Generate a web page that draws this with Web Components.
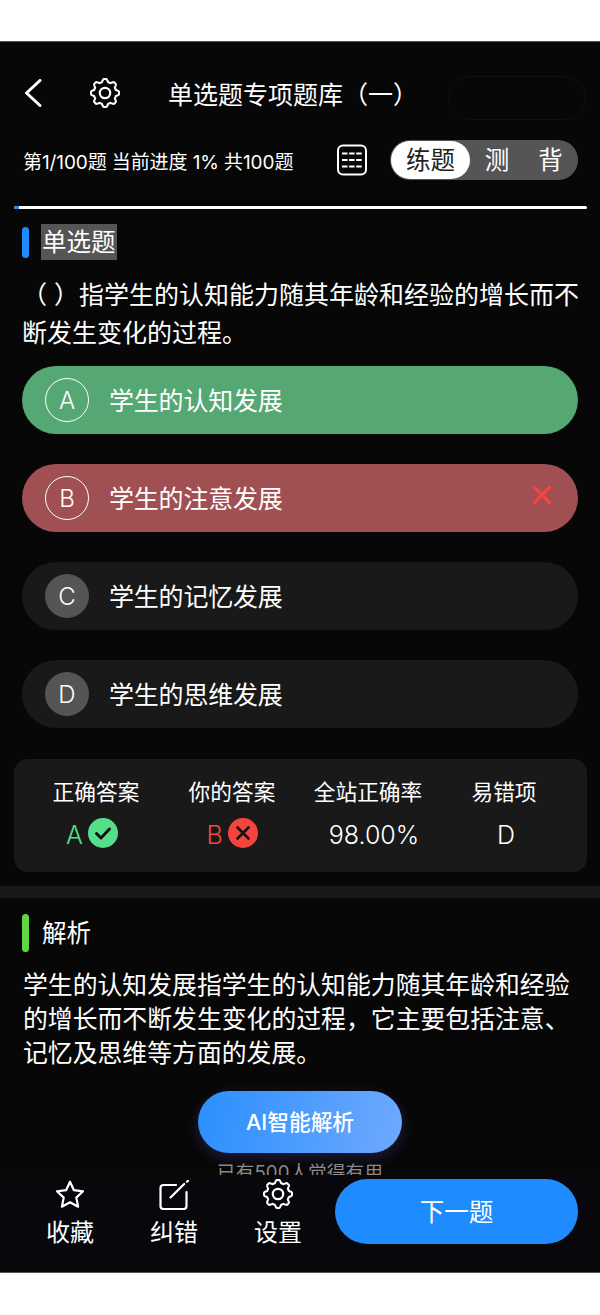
<!DOCTYPE html>
<html lang="zh"><head><meta charset="utf-8"><title>单选题专项题库</title>
<style>
html,body{margin:0;padding:0;background:#fff}
body{width:600px;height:1315px;overflow:hidden;font-family:"Inter","Noto Sans CJK SC",sans-serif;color:#fff}
</style></head><body>
<quiz-app>
  <top-bar slot="main" title-text="单选题专项题库（一）"></top-bar>
  <progress-row slot="main" text="第1/100题 当前进度 1% 共100题"></progress-row>
  <progress-line slot="main"></progress-line>
  <section-title slot="main" color="#1e8bff" mark style="margin-top:15px;height:36px">单选题</section-title>
  <body-text slot="main" style="margin-top:16px;line-height:38px;padding:0 15px 0 22px">（ ）指学生的认知能力随其年龄和经验的增长而不断发生变化的过程。</body-text>
  <div slot="main" style="display:flex;flex-direction:column;gap:30px;margin:14px 22px 0;flex:none">
    <option-row letter="A" state="right">学生的认知发展</option-row>
    <option-row letter="B" state="wrong">学生的注意发展</option-row>
    <option-row letter="C">学生的记忆发展</option-row>
    <option-row letter="D">学生的思维发展</option-row>
  </div>
  <stats-card slot="main"></stats-card>
  <div slot="main" style="height:12px;background:#191919;margin-top:14px;flex:none"></div>
  <section-title slot="main" color="#5fd648" bar="38" style="margin-top:16px;height:38px">解析</section-title>
  <body-text slot="main" style="margin-top:16px;line-height:34px;font-size:24.85px">学生的认知发展指学生的认知能力随其年龄和经验的增长而不断发生变化的过程，它主要包括注意、记忆及思维等方面的发展。</body-text>
  <ai-panel slot="main"></ai-panel>
  <bottom-bar slot="bar"></bottom-bar>
</quiz-app>
<script>
function gearPath(){let d='';const N=240;for(let i=0;i<N;i++){const t=i/N*2*Math.PI;
  const w=Math.max(-1,Math.min(1,Math.cos(8*t)*1.5));
  const r=12.6+1.4*w;
  d+=(i?'L':'M')+(15+r*Math.cos(t)).toFixed(2)+' '+(15+r*Math.sin(t)).toFixed(2);}return d+'Z';}
const GEAR=`<path fill="none" stroke="currentColor" stroke-width="2.1" stroke-linejoin="round" d="${gearPath()}"/><circle cx="15" cy="15" r="5.2" fill="none" stroke="currentColor" stroke-width="2.2"/>`;
function def(name,css,html,init){customElements.define(name,class extends HTMLElement{
  connectedCallback(){ if(this.shadowRoot)return; const r=this.attachShadow({mode:'open'});
    r.innerHTML='<style>'+css+'</style>'+(typeof html==='function'?html(this):html); if(init)init(this,r);}});}

def('quiz-app',`:host{display:block;margin-top:41px;height:1232px;box-sizing:border-box;background:#070707;border-top:1px solid #555;border-bottom:1px solid #555;position:relative}
 .wrap{height:100%;display:flex;flex-direction:column}
 .main{flex:1;min-height:0;overflow:hidden;display:flex;flex-direction:column}
 .ghost{position:absolute;left:448px;top:34px;width:138px;height:44px;border:1px solid #101010;border-radius:23px;box-sizing:border-box}`,
 `<div class="wrap"><div class="main"><slot name="main"></slot></div><slot name="bar"></slot></div><div class="ghost"></div>`);

def('top-bar',`:host{display:flex;align-items:center;height:50px;margin-top:28px;padding-left:24px;flex:none}
 svg{display:block;flex:none}
 .t{font-size:25px;line-height:50px;margin-left:48px;font-weight:400;white-space:nowrap}`,
 el=>`<svg width="18" height="28" viewBox="0 0 18 28" style="margin-top:-4px"><path d="M16 1.5 2.5 14 16 26.5" fill="none" stroke="#fff" stroke-width="3" stroke-linecap="round" stroke-linejoin="round"/></svg>
 <svg width="30" height="30" viewBox="0 0 30 30" style="color:#fff;margin-left:48px;margin-top:-5px">${GEAR}</svg>
 <div class="t">${el.getAttribute('title-text')}</div>`);

def('progress-row',`:host{display:flex;align-items:center;height:42px;margin-top:19px;padding-left:23px;flex:none}
 .t{font-size:19px;width:314px;white-space:nowrap;letter-spacing:-.1px;flex:none}
 svg{display:block;flex:none}
 .sw{margin-left:23px;width:188px;height:40px;border-radius:20px;background:#555;display:flex;align-items:center;font-size:24.5px;box-sizing:border-box;padding:1px}
 .sw span{display:block;text-align:center;line-height:38px}
 .a{width:79px;background:#fff;color:#222;border-radius:19px;flex:none}
 .b{width:54px}.c{flex:1}`,
 el=>`<div class="t">${el.getAttribute('text')}</div>
 <svg width="30" height="32" viewBox="0 0 30 32"><rect x="1" y="1.5" width="28" height="29" rx="5" fill="none" stroke="#fff" stroke-width="2"/><g stroke="#fff" stroke-width="2" stroke-dasharray="5.5 1.6"><path d="M5 9.5h21M5 16h21M5 22.5h21"/></g></svg>
 <div class="sw"><span class="a">练题</span><span class="b">测</span><span class="c">背</span></div>`);

def('progress-line',`:host{display:block;flex:none;height:3px;margin:25px 13px 0 14px;background:#fff;border-radius:2px;overflow:hidden}
 i{display:block;width:5px;height:100%;background:#1e8bff}`,`<i></i>`);

def('section-title',`:host{display:flex;align-items:center;flex:none;padding-left:22px}
 i{width:7px;height:31px;border-radius:4px;background:var(--c);flex:none}
 :host([bar]) i{height:100%}
 .t{margin-left:12px;font-size:24.5px;line-height:36px;padding:0 1px}
 :host([mark]) .t{background:#555}`,
 el=>`<i style="--c:${el.getAttribute('color')}"></i><div class="t"><slot></slot></div>`);

def('body-text',`:host{display:block;flex:none;padding:0 21px 0 23px;font-size:25px;color:#fff}`,`<slot></slot>`);

def('option-row',`:host{display:flex;align-items:center;height:68px;border-radius:34px;background:#191919;font-size:25px;padding-left:23px;position:relative;flex:none}
 :host([state=right]){background:#55a873}
 :host([state=wrong]){background:#a05053}
 .c{width:44px;height:44px;border-radius:50%;background:#555;display:flex;align-items:center;justify-content:center;box-sizing:border-box;flex:none;font-size:24px;font-weight:300}
 :host([state]) .c{background:none;border:1px solid #fff}
 .t{margin-left:20px;margin-top:-2px;letter-spacing:-.2px}
 svg{position:absolute;right:26px;top:21px}`,
 el=>`<div class="c">${el.getAttribute('letter')}</div><div class="t"><slot></slot></div>${el.getAttribute('state')==='wrong'?'<svg width="20" height="20" viewBox="0 0 20 20"><path d="M2.5 2.5l15 15M17.5 2.5l-15 15" stroke="#f5443c" stroke-width="3.4" stroke-linecap="round"/></svg>':''}`);

def('stats-card',`:host{display:grid;grid-template-columns:repeat(4,136px);flex:none;margin:31px 13px 0 14px;height:113px;box-sizing:border-box;padding:16px 14px 0;background:#191919;border-radius:14px;text-align:center}
 .l{font-size:21.7px;line-height:34px;white-space:nowrap}
 .v{font-size:25px;line-height:38px;margin-top:7px;display:flex;align-items:center;justify-content:center;gap:5px;font-weight:300}
 svg{display:block;margin-top:-4px}`,
 `<div><div class="l">正确答案</div><div class="v" style="color:#54e08a;padding-right:8px">A<svg width="30" height="30" viewBox="0 0 30 30"><circle cx="15" cy="15" r="15" fill="#54e08a"/><path d="M8.5 15.5l4.5 4.5 8.5-9" fill="none" stroke="#111" stroke-width="3" stroke-linecap="round" stroke-linejoin="round"/></svg></div></div>
 <div><div class="l">你的答案</div><div class="v" style="color:#f5443c">B<svg width="30" height="30" viewBox="0 0 30 30"><circle cx="15" cy="15" r="15" fill="#f5443c"/><path d="M9.5 9.5l11 11M20.5 9.5l-11 11" fill="none" stroke="#111" stroke-width="2.6" stroke-linecap="round"/></svg></div></div>
 <div><div class="l">全站正确率</div><div class="v" style="padding-left:12px">98.00%</div></div>
 <div><div class="l">易错项</div><div class="v" style="padding-left:4px">D</div></div>`);

def('ai-panel',`:host{display:flex;flex-direction:column;align-items:center;flex:none;margin-top:21px}
 .b{width:204px;height:62px;box-sizing:border-box;padding-bottom:3px;border-radius:31px;background:linear-gradient(100deg,#2a8ffe,#6fa9ff);box-shadow:0 4px 14px rgba(90,80,200,.3);display:flex;align-items:center;justify-content:center;font-size:21.7px;font-weight:500}
 .s{font-size:18.7px;color:#8a8a8a;margin-top:8px;line-height:24px;white-space:nowrap}`,
 `<div class="b">AI智能解析</div><div class="s">已有500人觉得有用</div>`);

def('bottom-bar',`:host{display:flex;flex:none;height:97px;background:#08080c;position:relative;box-sizing:border-box;padding:4px 22px 0 18px;align-items:flex-start}
 .i{width:104px;display:flex;flex-direction:column;align-items:center;flex:none;font-size:24px;margin-top:1px}
 .i span{line-height:30px;margin-top:8px}
 svg{display:block}
 .n{margin-left:5px;width:243px;height:65px;box-sizing:border-box;padding-bottom:2px;border-radius:33px;background:#1e8bff;display:flex;align-items:center;justify-content:center;font-size:24.5px}`,
 `<div class="i"><svg width="30" height="30" viewBox="0 0 30 30"><path d="M15 1.8l3.9 8.4 9.1 1.1-6.7 6.3 1.8 9.1-8.1-4.5-8.1 4.5 1.8-9.1L2 11.3l9.1-1.1z" fill="none" stroke="#fff" stroke-width="2.2" stroke-linejoin="round"/></svg><span>收藏</span></div>
 <div class="i"><svg width="32" height="30" viewBox="0 0 32 30"><path d="M18 5H5.5a3 3 0 0 0-3 3v18a3 3 0 0 0 3 3h20a3 3 0 0 0 3-3V12" fill="none" stroke="#fff" stroke-width="2.2" stroke-linecap="round"/><path d="M12.5 17.5 26.2 4M29 1.8l1-1" fill="none" stroke="#fff" stroke-width="2.2" stroke-linecap="round"/></svg><span>纠错</span></div>
 <div class="i"><svg width="30" height="30" viewBox="0 0 30 30" style="color:#fff;margin-top:-1px">${GEAR}</svg><span style="margin-top:9px">设置</span></div>
 <div class="n">下一题</div>`);
</script>
</body></html>
